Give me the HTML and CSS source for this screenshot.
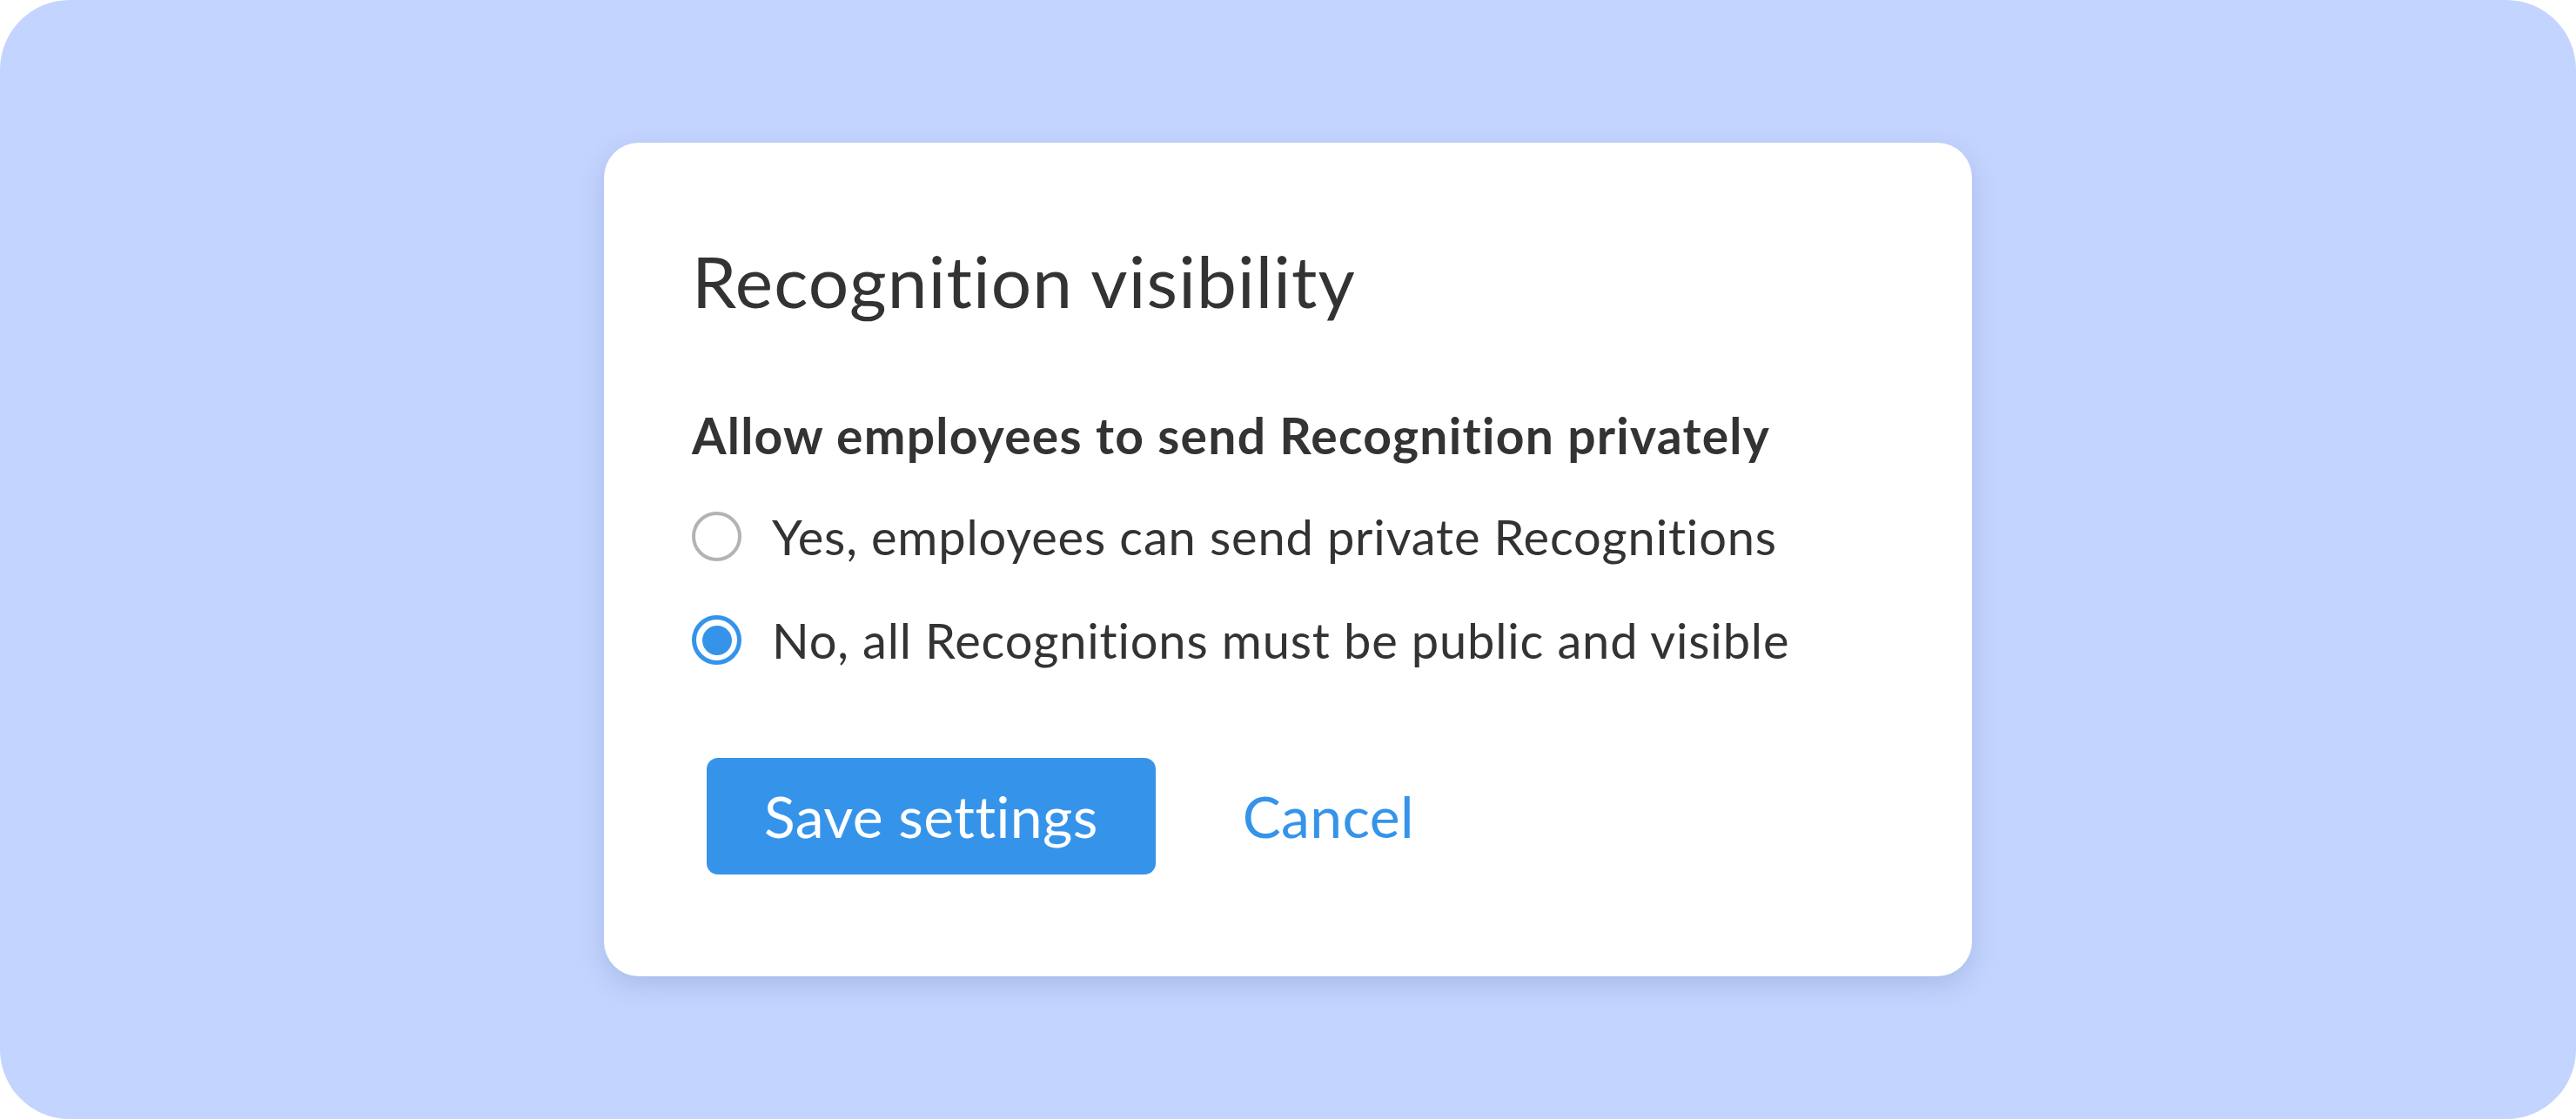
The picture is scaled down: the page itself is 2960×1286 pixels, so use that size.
FILE: index.html
```html
<!DOCTYPE html>
<html lang="en">
<head>
<meta charset="utf-8">
<title>Recognition visibility</title>
<link rel="stylesheet" href="styles.css">
</head>
<body>
<div class="frame">
  <div class="card">
    <h1 class="title">Recognition visibility</h1>
    <h2 class="subtitle">Allow employees to send Recognition privately</h2>
    <div class="options">
      <label class="option">
        <span class="radio"></span>
        <span class="option-text">Yes, employees can send private Recognitions</span>
      </label>
      <label class="option">
        <span class="radio radio-checked"><span class="radio-dot"></span></span>
        <span class="option-text">No, all Recognitions must be public and visible</span>
      </label>
    </div>
    <div class="actions">
      <button class="btn-primary" type="button">Save settings</button>
      <button class="btn-link" type="button">Cancel</button>
    </div>
  </div>
</div>
</body>
</html>
```

FILE: styles.css
```css
html, body {
  margin: 0;
  padding: 0;
  background: #ffffff;
}

body {
  font-family: Lato, "Liberation Sans", sans-serif;
  color: #333333;
  font-variant-ligatures: none;
}

.frame {
  width: 2960px;
  height: 1286px;
  background: #c3d4fe;
  border-radius: 80px;
  display: flex;
  align-items: center;
  justify-content: center;
}

.card {
  box-sizing: border-box;
  width: 1572px;
  background: #ffffff;
  border-radius: 40px;
  padding: 109px 101px 117px 101px;
  box-shadow: 0 10px 30px rgba(40, 60, 130, 0.16);
}

.title {
  margin: 0;
  font-size: 82px;
  font-weight: 400;
  line-height: 1.2;
  letter-spacing: 1.1px;
}

.subtitle {
  margin: 94px 0 0 0;
  font-size: 57px;
  font-weight: 700;
  line-height: 1.2;
  letter-spacing: 1.25px;
}

.options {
  margin-top: 49px;
  display: flex;
  flex-direction: column;
  gap: 52px;
}

.option {
  display: flex;
  align-items: center;
  gap: 35px;
  font-size: 56px;
  line-height: 1.2;
  letter-spacing: 0.85px;
}

.radio {
  box-sizing: border-box;
  width: 57px;
  height: 57px;
  border-radius: 50%;
  border: 4px solid #b3b3b3;
  flex: none;
  display: flex;
  align-items: center;
  justify-content: center;
}

.radio-checked {
  border: 5px solid #3594ea;
}

.radio-dot {
  width: 34px;
  height: 34px;
  border-radius: 50%;
  background: #3594ea;
}

.actions {
  margin-top: 101px;
  margin-left: 17px;
  display: flex;
  align-items: center;
}

.btn-primary {
  font-family: Lato, "Liberation Sans", sans-serif;
  font-variant-ligatures: none;
  font-size: 66px;
  line-height: 1.2;
  letter-spacing: 0.4px;
  color: #ffffff;
  background: #3594ea;
  border: none;
  border-radius: 13px;
  padding: 27px 66px;
  height: 134px;
}

.btn-link {
  font-family: Lato, "Liberation Sans", sans-serif;
  font-variant-ligatures: none;
  font-size: 66px;
  line-height: 1.2;
  letter-spacing: 0.4px;
  color: #3594ea;
  background: none;
  border: none;
  padding: 0;
  margin-left: 100px;
}
```
